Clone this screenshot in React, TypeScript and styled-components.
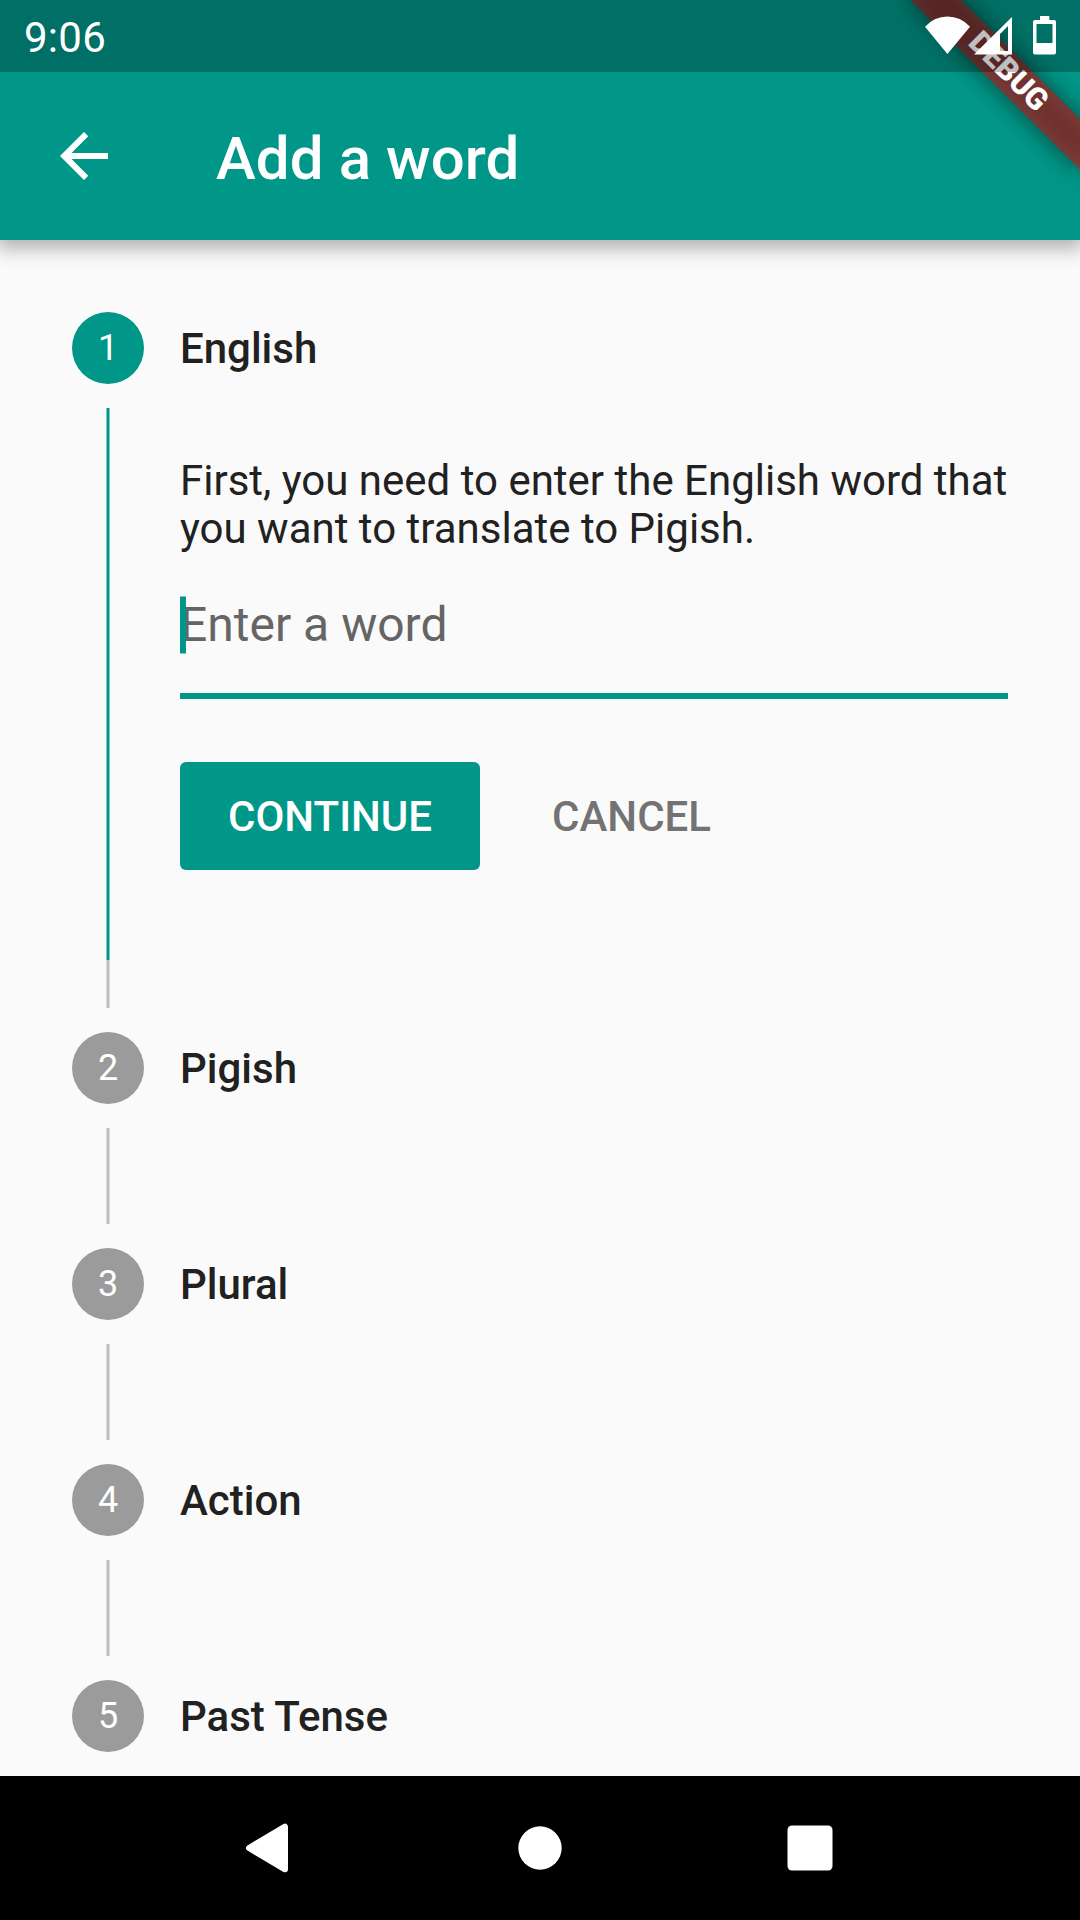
import React from 'react';
import styled, { createGlobalStyle } from 'styled-components';

const teal = '#009688';
const ink = '#212121';

const GlobalStyle = createGlobalStyle`
  * { box-sizing: border-box; }
  body { margin: 0; background: #fafafa; }
`;

const Screen = styled.div`
  position: relative;
  display: flex;
  flex-direction: column;
  width: 1080px;
  height: 1920px;
  overflow: hidden;
  background: #fafafa;
  color: ${ink};
  font-family: Roboto, 'Liberation Sans', sans-serif;
`;

const StatusBar = styled.div`
  position: relative;
  z-index: 3;
  display: flex;
  align-items: center;
  justify-content: space-between;
  height: 72px;
  flex: none;
  padding: 0 24px;
  background: rgba(0, 0, 0, 0.25);
  color: #fff;
`;

const Clock = styled.span`
  font-size: 42px;
  line-height: 48px;
  letter-spacing: 0.25px;
  padding-top: 4px;
`;

const StatusIcons = styled.svg`
  display: block;
  width: 160px;
  height: 72px;
`;

const Header = styled.header`
  flex: none;
  position: relative;
  z-index: 1;
  margin-top: -72px;
  padding-top: 72px;
  height: 240px;
  background: ${teal};
  box-shadow: 0 5px 18px 3px rgba(0, 0, 0, 0.31);
`;

const AppBar = styled.div`
  display: flex;
  align-items: center;
  height: 168px;
  padding-left: 48px;
  gap: 96px;
`;

const BackIcon = styled.svg`
  width: 72px;
  height: 72px;
  fill: #fff;
`;

const Title = styled.h1`
  margin: 0;
  padding-top: 6px;
  color: #fff;
  font-size: 60px;
  font-weight: 500;
  line-height: 72px;
  letter-spacing: 0.08px;
`;

const Ribbon = styled.div`
  position: absolute;
  z-index: 2;
  top: 84px;
  left: 960px;
  width: 240px;
  height: 36px;
  transform-origin: 120px -84px;
  transform: rotate(45deg);
`;

const RibbonShadow = styled.div`
  position: absolute;
  inset: 0;
  background: rgba(0, 0, 0, 0.5);
  filter: blur(12px);
`;

const RibbonLabel = styled.div`
  position: relative;
  height: 36px;
  background: rgba(183, 28, 28, 0.627);
  color: #fff;
  font-size: 30.6px;
  font-weight: 900;
  line-height: 33px;
  text-align: center;
`;

const Stepper = styled.main`
  flex: 1;
  min-height: 0;
  overflow: hidden;
  padding: 72px 72px 0;
`;

const Step = styled.section`
  display: grid;
  grid-template-columns: 72px 1fr;
  column-gap: 36px;
`;

const Rail = styled.div`
  display: flex;
  flex-direction: column;
  align-items: center;
`;

const Bullet = styled.div<{ $active?: boolean }>`
  flex: none;
  width: 72px;
  height: 72px;
  border-radius: 50%;
  background: ${(p) => (p.$active ? teal : '#9b9b9b')};
  color: #fff;
  font-size: 36px;
  line-height: 72px;
  text-align: center;
`;

const Line = styled.div<{ $length: number; $color: string; $top?: number; $bottom?: number }>`
  flex: none;
  width: 4px;
  height: ${(p) => p.$length}px;
  margin: ${(p) => p.$top ?? 0}px 0 ${(p) => p.$bottom ?? 0}px;
  background: linear-gradient(
    to right,
    ${(p) => p.$color}80 1px,
    ${(p) => p.$color} 1px 3px,
    ${(p) => p.$color}80 3px
  );
`;

const Heading = styled.h2`
  margin: 0;
  font-size: 42px;
  font-weight: 500;
  line-height: 73px;
  height: 74px;
`;

const Body = styled.div`
  padding-top: 71px;
`;

const Intro = styled.p`
  margin: 0;
  font-size: 42px;
  line-height: 48px;
  white-space: nowrap;
`;

const Field = styled.div`
  position: relative;
  height: 146px;
  padding-top: 43px;
  border-bottom: 6px solid ${teal};
  color: #656565;
  font-size: 48px;
  line-height: 57px;
`;

const Caret = styled.span`
  position: absolute;
  left: 0;
  top: 43px;
  width: 6px;
  height: 58px;
  background: linear-gradient(${teal}80 1px, ${teal} 1px 57px, ${teal}80 57px);
`;

const Actions = styled.div`
  display: flex;
  gap: 24px;
  margin-top: 63px;
`;

const Button = styled.button<{ $primary?: boolean }>`
  height: 108px;
  padding: 2px 48px 0;
  border: 0;
  border-radius: 6px;
  background: ${(p) => (p.$primary ? teal : 'transparent')};
  color: ${(p) => (p.$primary ? '#fff' : '#737373')};
  font: 500 42px/48px Roboto, 'Liberation Sans', sans-serif;
`;

const NavBar = styled.nav`
  flex: none;
  display: flex;
  align-items: center;
  justify-content: center;
  height: 144px;
  background: #000;
`;

const NavButton = styled.div`
  display: flex;
  align-items: center;
  justify-content: center;
  width: 270px;
  height: 144px;
`;

const NavIcon = styled.svg`
  width: 84px;
  height: 84px;
  fill: #fff;
`;

const upcoming = ['Pigish', 'Plural', 'Action', 'Past Tense'];
const grey = '#bdbdbd';

export default function App() {
  return (
    <Screen>
      <GlobalStyle />
      <StatusBar>
        <Clock>9:06</Clock>
        <StatusIcons viewBox="896 0 160 72" fill="#fff">
          <path d="M947.4 54 L925 26.7 Q934.5 16.6 947.4 16.6 Q960.5 16.6 970 26.7 Z" />
          <path fillRule="evenodd" d="M974 54.5 L1012 17 V54.5 Z M1000 34 V51 H1008 V26 Z" />
          <path fillRule="evenodd" d="M1040 16 H1049.3 V20 H1054 Q1056 20 1056 22 V52.6 Q1056 54.6 1054 54.6 H1035 Q1033 54.6 1033 52.6 V22 Q1033 20 1035 20 H1040 Z M1036.5 24 V43 H1052.5 V24 Z" />
        </StatusIcons>
      </StatusBar>
      <Header>
        <AppBar>
          <BackIcon viewBox="0 0 24 24">
            <path d="M20 11H7.83l5.59-5.59L12 4l-8 8 8 8 1.41-1.41L7.83 13H20v-2z" />
          </BackIcon>
          <Title>Add a word</Title>
        </AppBar>
      </Header>
      <Ribbon>
        <RibbonShadow />
        <RibbonLabel>DEBUG</RibbonLabel>
      </Ribbon>
      <Stepper>
        <Step>
          <Rail>
            <Bullet $active>1</Bullet>
            <Line $length={552} $color={teal} $top={24} />
            <Line $length={48} $color={grey} $bottom={24} />
          </Rail>
          <div>
            <Heading>English</Heading>
            <Body>
              <Intro>
                First, you need to enter the English word that
                <br />
                you want to translate to Pigish.
              </Intro>
              <Field>
                Enter a word
                <Caret />
              </Field>
              <Actions>
                <Button $primary>CONTINUE</Button>
                <Button>CANCEL</Button>
              </Actions>
            </Body>
          </div>
        </Step>
        {upcoming.map((name, i) => (
          <Step key={name}>
            <Rail>
              <Bullet>{i + 2}</Bullet>
              {i < upcoming.length - 1 && <Line $length={96} $color={grey} $top={24} $bottom={24} />}
            </Rail>
            <Heading>{name}</Heading>
          </Step>
        ))}
      </Stepper>
      <NavBar>
        <NavButton>
          <NavIcon viewBox="0 0 84 84">
            <path d="M21 42 L57 20.7 V63.3 Z" stroke="#fff" strokeWidth="6" strokeLinejoin="round" />
          </NavIcon>
        </NavButton>
        <NavButton>
          <NavIcon viewBox="0 0 84 84">
            <circle cx="42" cy="42" r="21.7" />
          </NavIcon>
        </NavButton>
        <NavButton>
          <NavIcon viewBox="0 0 84 84">
            <rect x="19.5" y="19.5" width="45" height="45" rx="4.5" />
          </NavIcon>
        </NavButton>
      </NavBar>
    </Screen>
  );
}
